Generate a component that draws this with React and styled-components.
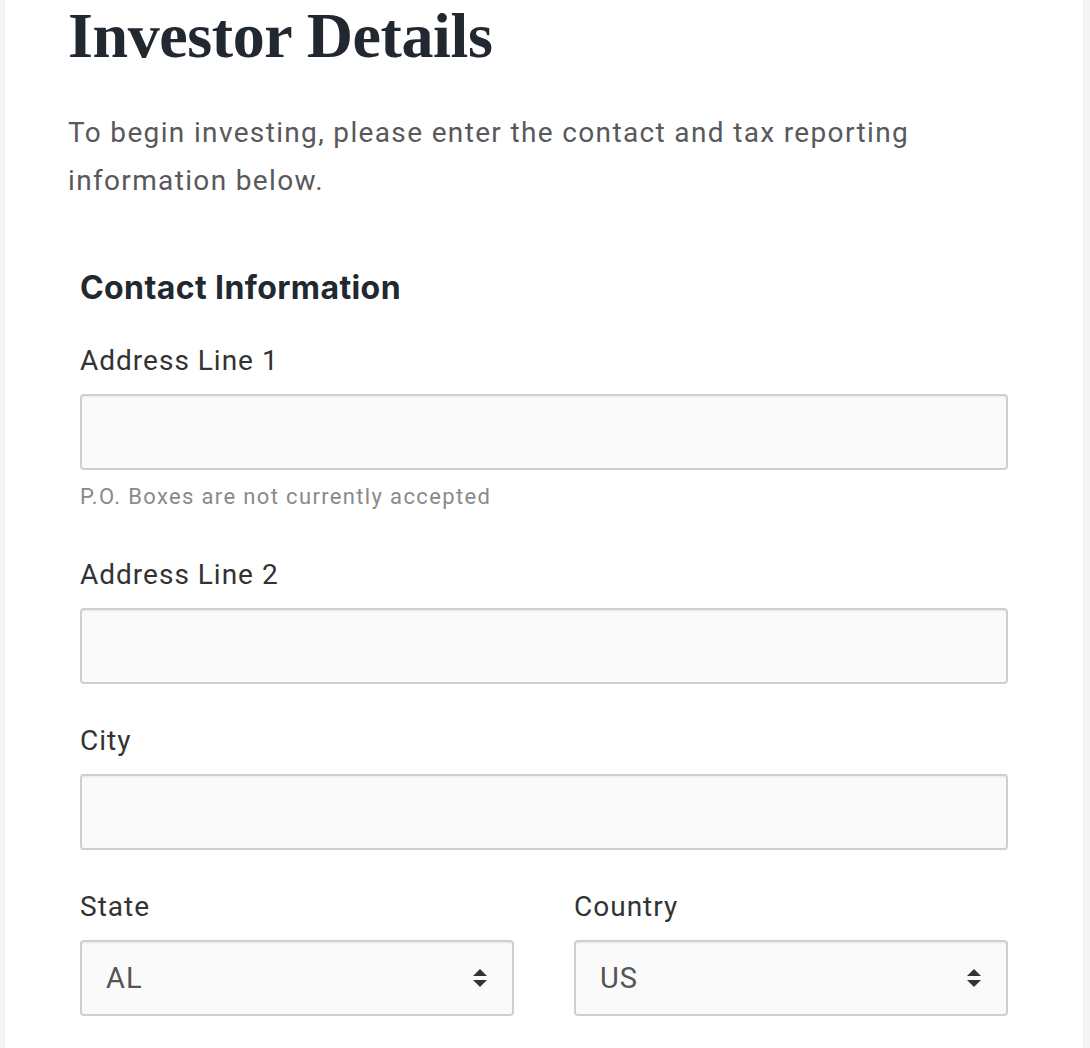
import React from "react";
import styled, { createGlobalStyle } from "styled-components";

const GlobalStyle = createGlobalStyle`
  html, body {
    margin: 0;
    padding: 0;
    background: #f4f4f4;
  }
  * {
    box-sizing: border-box;
  }
`;

const Page = styled.div`
  margin: 0 6px 0 4px;
  min-height: 1048px;
  background: #ffffff;
  border-left: 1px solid #ececec;
  border-right: 1px solid #ececec;
  padding: 0 0 40px 63px;
`;

const Title = styled.h1`
  margin: 0;
  padding-top: 3px;
  font-family: "Liberation Serif", "DejaVu Serif", serif;
  font-weight: 700;
  font-size: 64px;
  line-height: 66px;
  letter-spacing: -0.4px;
  color: #212830;
`;

const Intro = styled.p`
  margin: 40px 0 0;
  max-width: 900px;
  font-family: Roboto, "Liberation Sans", sans-serif;
  font-size: 28px;
  line-height: 48px;
  letter-spacing: 1.35px;
  color: #58595b;
`;

const Form = styled.form`
  width: 928px;
  margin: 63px 0 0 12px;
  display: flex;
  flex-direction: column;
`;

const SectionTitle = styled.h2`
  margin: 0 0 33px;
  font-family: Inter, "Liberation Sans", sans-serif;
  font-weight: 700;
  font-size: 32px;
  line-height: 40px;
  letter-spacing: 0.4px;
  color: #212830;
`;

const Row = styled.div`
  display: grid;
  grid-template-columns: 1fr 1fr;
  column-gap: 60px;
`;

const Field = styled.div`
  display: flex;
  flex-direction: column;
  margin-bottom: ${(p) => (p.$last ? 0 : "37px")};
`;

const Label = styled.label`
  margin-bottom: 13px;
  font-family: Roboto, "Liberation Sans", sans-serif;
  font-size: 28px;
  line-height: 40px;
  letter-spacing: 1px;
  color: #333333;
`;

const boxStyle = `
  width: 100%;
  height: 76px;
  border: 2px solid #cfcfcf;
  border-radius: 4px;
  background: #fafafa;
  box-shadow: inset 0 3px 3px -2px rgba(0, 0, 0, 0.08);
  font-family: Roboto, "Liberation Sans", sans-serif;
  font-size: 29px;
  letter-spacing: 1px;
  color: #555555;
`;

const TextInput = styled.input`
  ${boxStyle}
  padding: 0 24px;
  outline: none;
`;

const Helper = styled.div`
  margin: 12px 0 6px;
  font-family: Roboto, "Liberation Sans", sans-serif;
  font-size: 22px;
  line-height: 30px;
  letter-spacing: 1.35px;
  color: #8a8a8a;
`;

const SelectBox = styled.div`
  ${boxStyle}
  position: relative;
  display: flex;
  align-items: center;
  padding: 0 24px;
`;

const NativeSelect = styled.select`
  position: absolute;
  inset: 0;
  width: 100%;
  height: 100%;
  opacity: 0;
  cursor: pointer;
`;

const SelectValue = styled.span`
  flex: 1;
`;

const Arrows = () => (
  <svg width="16" height="24" viewBox="0 0 16 24" aria-hidden="true">
    <path d="M8 3 L15 10 L1 10 Z" fill="#333" />
    <path d="M8 21 L15 14 L1 14 Z" fill="#333" />
  </svg>
);

const Select = ({ value, options }) => (
  <SelectBox>
    <SelectValue>{value}</SelectValue>
    <Arrows />
    <NativeSelect defaultValue={value}>
      {options.map((o) => (
        <option key={o} value={o}>
          {o}
        </option>
      ))}
    </NativeSelect>
  </SelectBox>
);

export default function App() {
  return (
    <>
      <GlobalStyle />
      <Page>
        <Title>Investor Details</Title>
        <Intro>
          To begin investing, please enter the contact and tax reporting
          information below.
        </Intro>
        <Form onSubmit={(e) => e.preventDefault()}>
          <SectionTitle>Contact Information</SectionTitle>
          <Field>
            <Label>Address Line 1</Label>
            <TextInput type="text" />
            <Helper>P.O. Boxes are not currently accepted</Helper>
          </Field>
          <Field>
            <Label>Address Line 2</Label>
            <TextInput type="text" />
          </Field>
          <Field>
            <Label>City</Label>
            <TextInput type="text" />
          </Field>
          <Row>
            <Field $last>
              <Label>State</Label>
              <Select value="AL" options={["AL", "AK", "AZ", "CA", "NY"]} />
            </Field>
            <Field $last>
              <Label>Country</Label>
              <Select value="US" options={["US", "CA", "GB"]} />
            </Field>
          </Row>
        </Form>
      </Page>
    </>
  );
}
